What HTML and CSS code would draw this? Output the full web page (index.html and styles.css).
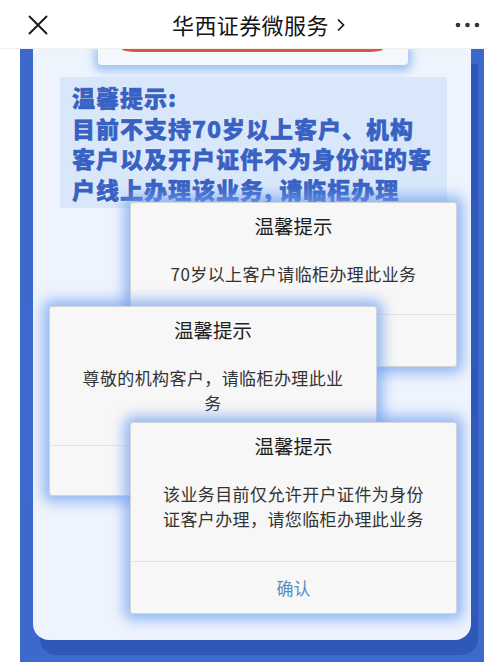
FILE: index.html
```html
<!DOCTYPE html>
<html lang="zh-CN">
<head>
<meta charset="utf-8">
<title>华西证券微服务</title>
<link rel="stylesheet" href="styles.css">
</head>
<body>
<header class="topbar">
  <svg class="close" width="20" height="20" viewBox="0 0 20 20"><path d="M1.5 1.5L18.5 18.5M18.5 1.5L1.5 18.5" stroke="#1a1a1a" stroke-width="1.9" fill="none" stroke-linecap="round"/></svg>
  <div class="title">华西证券微服务<svg class="chev" width="10" height="14" viewBox="0 0 10 14"><path d="M2 1.5L7.5 7L2 12.5" stroke="#1a1a1a" stroke-width="1.7" fill="none"/></svg></div>
  <svg class="more" width="26" height="6" viewBox="0 0 26 6"><circle cx="3" cy="3" r="2.3" fill="#333"/><circle cx="12.5" cy="3" r="2.3" fill="#333"/><circle cx="22" cy="3" r="2.3" fill="#333"/></svg>
</header>
<main class="poster">
  <div class="panel">
    <div class="topcard"><div class="redbtn"></div></div>
    <div class="notice">温馨提示:<br>目前不支持70岁以上客户、机构<br>客户以及开户证件不为身份证的客<br>户线上办理该业务, 请临柜办理</div>
    <div class="card card1">
      <div class="card-body">
        <div class="card-title">温馨提示</div>
        <div class="card-text">70岁以上客户请临柜办理此业务</div>
      </div>
      <div class="card-foot">确认</div>
    </div>
    <div class="card card2">
      <div class="card-body">
        <div class="card-title">温馨提示</div>
        <div class="card-text">尊敬的机构客户，请临柜办理此业<br>务</div>
      </div>
      <div class="card-foot">确认</div>
    </div>
    <div class="card card3">
      <div class="card-body">
        <div class="card-title">温馨提示</div>
        <div class="card-text">该业务目前仅允许开户证件为身份<br>证客户办理，请您临柜办理此业务</div>
      </div>
      <div class="card-foot">确认</div>
    </div>
  </div>
</main>
</body>
</html>
```
FILE: styles.css
```css
* { box-sizing: border-box; }
html, body { margin: 0; padding: 0; background: #fff; }
body {
  width: 487px;
  height: 666px;
  overflow: hidden;
  font-family: "Noto Sans CJK SC", "Noto Sans", sans-serif;
}
.topbar {
  height: 49px;
  display: flex;
  align-items: center;
  background: #fff;
  border-bottom: 1px solid #f0f0f0;
}
.close { margin-left: 28px; margin-top: 2px; flex: none; }
.title {
  margin-left: 124px;
  font-size: 22px;
  line-height: 30px;
  color: #141414;
  display: flex;
  align-items: center;
  letter-spacing: 0.4px;
}
.chev { margin-left: 7px; margin-top: 1px; }
.more { margin-left: auto; margin-right: 6px; margin-top: 1px; }

.poster {
  margin-left: 20px;
  width: 464px;
  height: 613px;
  background: #3d69cf;
  padding: 0 13px;
  overflow: hidden;
}
.panel {
  width: 438px;
  height: 591px;
  background: #eef4fd;
  border-radius: 0 0 16px 16px;
  box-shadow: 7px 15px 0 #2f58b9;
}
.topcard {
  margin-left: 65px;
  width: 310px;
  height: 16px;
  background: #f4f7fc;
  border-radius: 0 0 4px 4px;
  box-shadow: 0 2px 9px 4px rgba(130, 172, 240, 0.7);
  padding-left: 24px;
}
.redbtn {
  width: 261px;
  height: 3px;
  background: #de5440;
  border-radius: 0 0 14px 14px / 0 0 3px 3px;
}
.notice {
  margin-top: 12px;
  margin-left: 27px;
  width: 387px;
  height: 131px;
  background: #d9e7fa;
  padding: 5px 0 0 12px;
  font-size: 23px;
  line-height: 30.5px;
  letter-spacing: 1px;
  font-weight: 900;
  color: #3762c4;
  -webkit-text-stroke: 0.6px #3762c4;
  white-space: nowrap;
  text-shadow: 0 0 1.5px #fff, 0 0 1.5px #fff, 0 0 1.5px #fff;
}
.card {
  position: relative;
  width: 327px;
  background: #f7f7f7;
  border: 1px solid #d2d5da;
  border-radius: 3px;
  box-shadow: 0 0 13px 6px rgba(115, 162, 240, 0.75);
  text-align: center;
}
.card1 { margin-top: -6px; margin-left: 97px; z-index: 1; }
.card2 { margin-top: -61px; margin-left: 16px; width: 328px; z-index: 2; }
.card3 { margin-top: -74px; margin-left: 97px; z-index: 3; }
.card-body { padding: 10px 0 30px; }
.card1 .card-body { padding-bottom: 28px; }
.card-title {
  font-size: 19.5px;
  line-height: 26px;
  color: #1f1f1f;
}
.card-text {
  margin-top: 22px;
  font-size: 17px;
  line-height: 25px;
  letter-spacing: 0.4px;
  color: #333;
}
.card-foot {
  height: 52px;
  line-height: 52px;
  border-top: 1px solid #e4e4e4;
  font-size: 17px;
  color: #5a8dc4;
}
.card2 .card-foot { height: 50px; }
```
